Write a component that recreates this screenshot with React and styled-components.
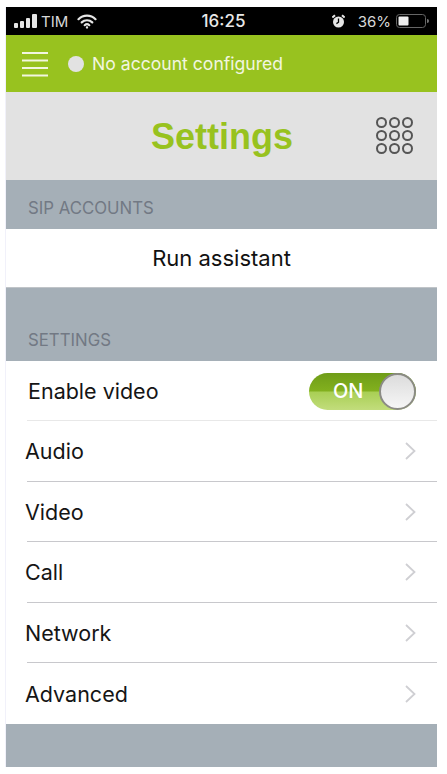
import React from "react";
import styled, { createGlobalStyle } from "styled-components";

const GlobalStyle = createGlobalStyle`
  html, body {
    margin: 0;
    padding: 0;
    background: #fff;
  }
`;

const Page = styled.div`
  width: 431px;
  margin: 7px 0 0 6px;
  font-family: "Inter", "Liberation Sans", sans-serif;
  background: #a5afb7;
  box-shadow: -1px 0 0 #f1f1fa;
`;

const StatusBar = styled.div`
  height: 28px;
  background: #000;
  color: #d8d8d8;
  display: grid;
  grid-template-columns: 1fr auto 1fr;
  align-items: center;
  padding: 0 8px;
  font-size: 15px;
`;

const StatusLeft = styled.div`
  display: flex;
  align-items: center;
  gap: 3px;
`;

const StatusRight = styled.div`
  display: flex;
  align-items: center;
  justify-content: flex-end;
  gap: 5px;
`;

const Carrier = styled.span`
  margin-right: 6px;
  font-size: 15px;
`;

const Clock = styled.div`
  color: #e8e8e8;
  font-weight: 500;
  font-size: 17px;
  margin-left: 4px;
`;

const Percent = styled.span`
  margin-left: 8px;
`;

const AccountBar = styled.div`
  height: 57px;
  background: #98c21f;
  display: flex;
  align-items: center;
  padding-left: 16px;
  color: #f2f6e0;
  font-size: 17.6px;
`;

const Dot = styled.span`
  width: 16px;
  height: 16px;
  border-radius: 50%;
  background: #e2e2e2;
  margin: 0 8px 0 20px;
`;

const TitleBar = styled.div`
  height: 88px;
  background: #e2e2e2;
  display: flex;
  align-items: center;
  justify-content: center;
  position: relative;
`;

const Title = styled.h1`
  margin: 2px 0 0 1px;
  font-family: "Liberation Sans", sans-serif;
  font-size: 36px;
  font-weight: 700;
  color: #98c21f;
`;

const Dialpad = styled.div`
  position: absolute;
  right: 24px;
  top: 25px;
  display: grid;
  grid-template-columns: repeat(3, 11px);
  gap: 2px;
`;

const DialKey = styled.span`
  width: 11px;
  height: 11px;
  box-sizing: border-box;
  border: 2.6px solid #555;
  border-radius: 50%;
`;

const SectionHeader = styled.div`
  height: ${(p) => p.$height}px;
  box-sizing: border-box;
  background: #a5afb7;
  color: #727984;
  font-size: 16.8px;
  padding: 0 0 11px 22px;
  display: flex;
  align-items: flex-end;
`;

const AssistantRow = styled.div`
  height: 59px;
  background: #fff;
  color: #111;
  font-size: 22px;
  display: flex;
  align-items: center;
  justify-content: center;
  border-bottom: 1px solid #c0c4c8;
  box-sizing: border-box;
`;

const List = styled.div`
  background: #fff;
`;

const Row = styled.div`
  height: ${(p) => p.$height || 60.6}px;
  box-sizing: border-box;
  display: flex;
  align-items: center;
  justify-content: space-between;
  padding: 0 21px 0 ${(p) => p.$indent || 19}px;
  font-size: 21.5px;
  color: #151515;
  position: relative;

  &::after {
    content: "";
    display: ${(p) => (p.$last ? "none" : "block")};
    position: absolute;
    left: 21px;
    right: 0;
    bottom: 0;
    height: 1px;
    background: ${(p) => (p.$soft ? "#e8e8e8" : "#c8c8cc")};
  }
`;

const Toggle = styled.div`
  width: 107px;
  height: 37px;
  box-sizing: border-box;
  border-radius: 19px;
  background: linear-gradient(#6f9d18 0%, #82b01e 48%, #a9cf55 52%, #c2dd7c 100%);
  display: flex;
  align-items: center;
  justify-content: space-between;
  color: #fff;
  font-size: 20px;
  font-weight: 500;
  padding-left: 24px;
`;

const Knob = styled.span`
  width: 37px;
  height: 37px;
  box-sizing: border-box;
  border-radius: 50%;
  border: 2px solid #8b8b85;
  background: linear-gradient(#dcdcdc, #f6f6f6);
`;

const Footer = styled.div`
  height: 43px;
`;

const Signal = () => (
  <svg width="24" height="14" viewBox="0 0 24 14" fill="#e6e6e6">
    <rect x="0" y="9" width="4" height="5" rx="1" />
    <rect x="6" y="7" width="4" height="7" rx="1" />
    <rect x="12" y="4" width="4" height="10" rx="1" />
    <rect x="18" y="0" width="5" height="14" rx="1" />
  </svg>
);

const Wifi = () => (
  <svg width="20" height="15" viewBox="0 0 20 15" fill="none" stroke="#e6e6e6" strokeWidth="2.2" strokeLinecap="round">
    <path d="M1.5 5.2a12 12 0 0 1 17 0" />
    <path d="M4.7 8.4a7.6 7.6 0 0 1 10.6 0" />
    <path d="M7.7 11.2a3.4 3.4 0 0 1 4.6 0" />
    <circle cx="10" cy="13.4" r="0.6" fill="#e6e6e6" strokeWidth="1.2" />
  </svg>
);

const Alarm = () => (
  <svg width="13" height="14" viewBox="0 0 13 14">
    <circle cx="6.5" cy="8" r="5.5" fill="#e6e6e6" />
    <path d="M6.5 4.6V8.2L4.4 9.6" fill="none" stroke="#000" strokeWidth="1.3" />
    <path d="M0.4 3.6L3 1.2M12.6 3.6L10 1.2" stroke="#e6e6e6" strokeWidth="2" />
  </svg>
);

const Battery = () => (
  <svg width="33" height="14" viewBox="0 0 33 14">
    <rect x="0.5" y="0.5" width="29" height="13" rx="3" fill="none" stroke="#666" />
    <rect x="2.5" y="2.5" width="10" height="9" rx="1" fill="#eee" />
    <path d="M31 5a2 2 0 0 1 0 4z" fill="#777" />
  </svg>
);

const Menu = () => (
  <svg width="26" height="26" viewBox="0 0 26 26" stroke="#f2f6e0" strokeWidth="2.2">
    <path d="M0 2H26M0 9.5H26M0 17H26M0 24.5H26" />
  </svg>
);

const Chevron = () => (
  <svg width="11" height="18" viewBox="0 0 11 18" fill="none" stroke="#cfcfd3" strokeWidth="1.8">
    <path d="M1 1L9.5 9L1 17" />
  </svg>
);

const rows = ["Audio", "Video", "Call", "Network", "Advanced"];

export default function App() {
  return (
    <Page>
      <GlobalStyle />
      <StatusBar>
        <StatusLeft>
          <Signal />
          <Carrier>TIM</Carrier>
          <Wifi />
        </StatusLeft>
        <Clock>16:25</Clock>
        <StatusRight>
          <Alarm />
          <Percent>36%</Percent>
          <Battery />
        </StatusRight>
      </StatusBar>
      <AccountBar>
        <Menu />
        <Dot />
        No account configured
      </AccountBar>
      <TitleBar>
        <Title>Settings</Title>
        <Dialpad>
          {Array.from({ length: 9 }).map((_, i) => (
            <DialKey key={i} />
          ))}
        </Dialpad>
      </TitleBar>
      <SectionHeader $height={49}>SIP ACCOUNTS</SectionHeader>
      <AssistantRow>Run assistant</AssistantRow>
      <SectionHeader $height={73}>SETTINGS</SectionHeader>
      <List>
        <Row $indent={22} $soft $height={60}>
          Enable video
          <Toggle>
            ON
            <Knob />
          </Toggle>
        </Row>
        {rows.map((name, i) => (
          <Row key={name} $last={i === rows.length - 1}>
            {name}
            <Chevron />
          </Row>
        ))}
      </List>
      <Footer />
    </Page>
  );
}
